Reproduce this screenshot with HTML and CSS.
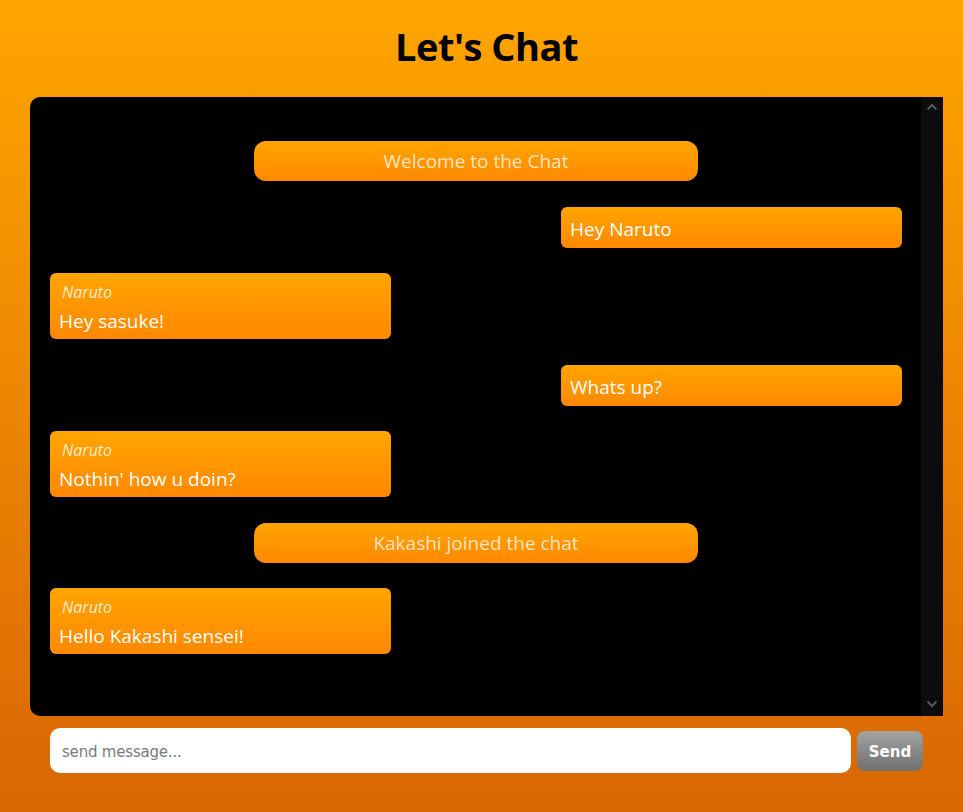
FILE: index.html
```html
<!DOCTYPE html>
<html lang="en">
<head>
<meta charset="utf-8">
<title>Let's Chat</title>
<link rel="stylesheet" href="styles.css">
</head>
<body>
  <header class="header">
    <h1 class="title">Let's Chat</h1>
  </header>
  <main class="chat-box">
    <div class="messages">
      <div class="msg msg-system">Welcome to the Chat</div>
      <div class="msg msg-out">Hey Naruto</div>
      <div class="msg msg-in">
        <span class="sender">Naruto</span>
        <span class="text">Hey sasuke!</span>
      </div>
      <div class="msg msg-out">Whats up?</div>
      <div class="msg msg-in">
        <span class="sender">Naruto</span>
        <span class="text">Nothin' how u doin?</span>
      </div>
      <div class="msg msg-system">Kakashi joined the chat</div>
      <div class="msg msg-in">
        <span class="sender">Naruto</span>
        <span class="text">Hello Kakashi sensei!</span>
      </div>
    </div>
    <div class="scrollbar">
      <svg class="arrow" width="12" height="8" viewBox="0 0 12 8"><path d="M1.5 6.5 L6 2 L10.5 6.5" fill="none" stroke="#58585c" stroke-width="2"/></svg>
      <svg class="arrow" width="12" height="8" viewBox="0 0 12 8"><path d="M1.5 1.5 L6 6 L10.5 1.5" fill="none" stroke="#58585c" stroke-width="2"/></svg>
    </div>
  </main>
  <form class="composer">
    <input class="composer-input" type="text" placeholder="send message...">
    <button class="send-btn" type="button">Send</button>
  </form>
</body>
</html>
```
FILE: styles.css
```css
html, body {
  margin: 0;
  padding: 0;
}
body {
  height: 812px;
  background: linear-gradient(to bottom, #ffa500 0%, #d96604 100%);
  font-family: "Open Sans", "Noto Sans", sans-serif;
  overflow: hidden;
}
.header {
  height: 97px;
  display: flex;
  align-items: center;
  justify-content: center;
}
.title {
  margin: 0 0 6px 0;
  font-size: 38px;
  font-weight: 700;
  color: #000;
  padding-left: 10px;
  letter-spacing: -0.5px;
}
.chat-box {
  margin-left: 30px;
  width: 913px;
  height: 619px;
  background: #000;
  border-radius: 10px 0 0 10px;
  display: flex;
  overflow: hidden;
}
.messages {
  flex: 1;
  padding: 44px 19px 0 20px;
  display: flex;
  flex-direction: column;
  gap: 25.5px;
}
.scrollbar {
  width: 22px;
  background: #0c0c0e;
  display: flex;
  flex-direction: column;
  justify-content: space-between;
  align-items: center;
  padding: 6px 0 8px;
  box-sizing: border-box;
}
.msg {
  background: linear-gradient(to bottom, #ffa500 0%, #ff8800 100%);
  color: #fff;
  box-sizing: border-box;
}
.msg-system {
  align-self: center;
  width: 444px;
  height: 40px;
  border-radius: 12px;
  display: flex;
  align-items: center;
  justify-content: center;
  color: rgba(255, 244, 225, 0.85);
  font-size: 19px;
}
.msg-out {
  align-self: flex-end;
  width: 341px;
  height: 41px;
  border-radius: 6px;
  padding: 3px 9px 0;
  display: flex;
  align-items: center;
  font-size: 19px;
}
.msg-in {
  align-self: flex-start;
  width: 341px;
  height: 66px;
  border-radius: 6px;
  padding: 9px 9px 0;
  display: flex;
  flex-direction: column;
}
.sender {
  font-size: 16px;
  font-style: italic;
  color: rgba(255, 248, 235, 0.88);
  padding-left: 3px;
  line-height: 20px;
}
.text {
  font-size: 19px;
  line-height: 30px;
  margin-top: 4px;
}
.composer {
  display: flex;
  align-items: center;
  margin: 12px 0 0 50px;
  gap: 6px;
}
.composer-input {
  width: 801px;
  height: 45px;
  box-sizing: border-box;
  border: none;
  border-radius: 10px;
  background: #fff;
  padding: 3px 12px 0;
  font-family: "DejaVu Sans", sans-serif;
  font-size: 15px;
  letter-spacing: -0.2px;
  outline: none;
}
.composer-input::placeholder {
  color: #777a80;
}
.send-btn {
  width: 66px;
  height: 40px;
  border: none;
  border-radius: 8px;
  background: linear-gradient(to bottom, #a3a3a3 0%, #6f6f6f 100%);
  color: #fff;
  font-family: "DejaVu Sans", sans-serif;
  font-weight: 700;
  font-size: 15px;
  padding: 3px 0 0;
}
```
